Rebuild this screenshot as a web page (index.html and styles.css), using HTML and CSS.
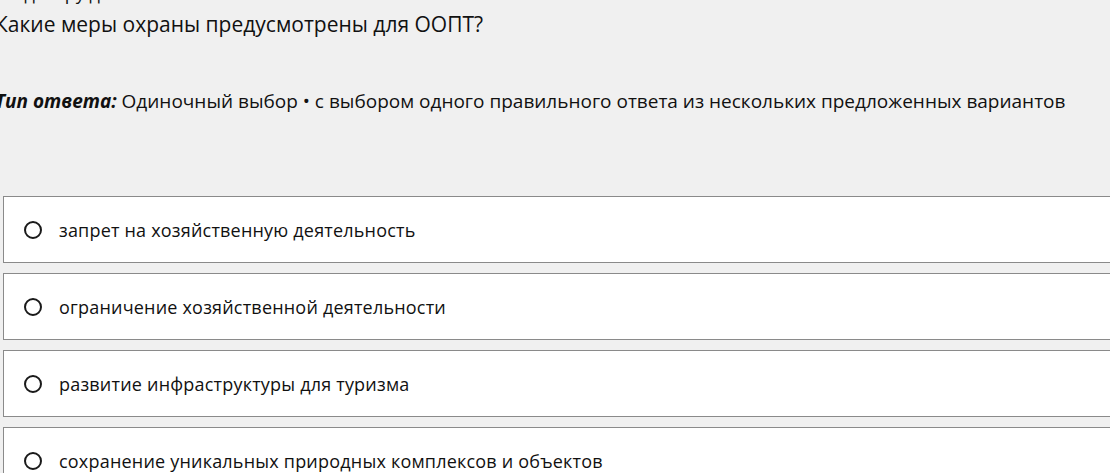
FILE: index.html
```html
<!doctype html>
<html>
<head>
	<meta charset="UTF-8">
	<title>Вопрос</title>
	<link rel="stylesheet" href="styles.css">
</head>
<body>
	<div class="quiz">
		<div class="quiz__head">
			<p class="quiz__crumb">Раздел: ру д.</p>
			<h2 class="quiz__title">Какие меры охраны предусмотрены для ООПТ?</h2>
			<p class="quiz__type"><em>Тип ответа:</em> Одиночный выбор • с выбором одного правильного ответа из нескольких предложенных вариантов</p>
		</div>
		<ul class="quiz__options">
			<li class="option"><span class="option__radio"></span><span>запрет на хозяйственную деятельность</span></li>
			<li class="option"><span class="option__radio"></span><span>ограничение хозяйственной деятельности</span></li>
			<li class="option"><span class="option__radio"></span><span>развитие инфраструктуры для туризма</span></li>
			<li class="option"><span class="option__radio"></span><span>сохранение уникальных природных комплексов и объектов</span></li>
		</ul>
	</div>
</body>
</html>
```

FILE: styles.css
```css
*, *:before, *:after { box-sizing: border-box; margin: 0; padding: 0; }
html, body { height: 100%; overflow: hidden; }
body { background: #f0f0f0; color: #111; font-family: 'Open Sans', sans-serif; }

.quiz { width: 1130px; }
.quiz__head { margin-left: -5px; }
.quiz__crumb { font-size: 18px; line-height: 22px; margin-top: -18px; }
.quiz__title { font-size: 21px; font-weight: 400; line-height: 30px; margin-top: 5px; }
.quiz__type { font-size: 19px; line-height: 26px; margin-top: 49px; white-space: nowrap; }
.quiz__type em { font-weight: 700; font-style: italic; }

.quiz__options { list-style: none; margin: 82px 0 0 3px; display: flex; flex-direction: column; gap: 10px; }
.option { background: #fff; border: 1px solid #8a8a8a; height: 67px; display: flex; align-items: center; gap: 17px; padding-left: 20px; font-size: 18px; letter-spacing: 0.2px; }
.option__radio { width: 18px; height: 18px; border: 2px solid #1a1a1a; border-radius: 50%; flex: none; }
```
